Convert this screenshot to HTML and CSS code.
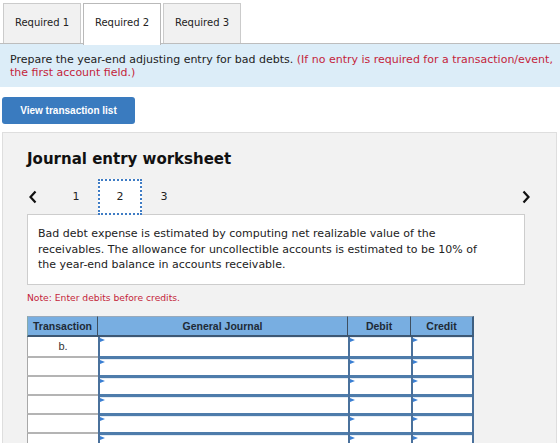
FILE: index.html
```html
<!DOCTYPE html>
<html>
    <head>
        <meta charset="utf-8" />
        <title>Journal entry worksheet</title>
        <link rel="stylesheet" href="styles.css">
    </head>
    <body>
        <div class="tabs">
            <div class="tab">Required 1</div>
            <div class="tab active">Required 2</div>
            <div class="tab">Required 3</div>
        </div>
        <div class="banner">
            Prepare the year-end adjusting entry for bad debts. <span class="red">(If no entry is required for a transaction/event,<br>the first account field.)</span>
        </div>
        <button type="button" class="list-btn">View transaction list</button>
        <div class="worksheet">
            <h3 class="ws-title">Journal entry worksheet</h3>
            <div class="nav">
                <span class="arrow left">
                    <svg width="10" height="14" viewBox="0 0 10 14"><polyline points="7.5,1.5 2.5,7 7.5,12.5" fill="none" stroke="#111" stroke-width="2.2"/></svg>
                </span>
                <span class="step">1</span>
                <span class="step current">2</span>
                <span class="step">3</span>
                <span class="arrow right">
                    <svg width="10" height="14" viewBox="0 0 10 14"><polyline points="2.5,1.5 7.5,7 2.5,12.5" fill="none" stroke="#111" stroke-width="2.2"/></svg>
                </span>
            </div>
            <div class="desc">
                Bad debt expense is estimated by computing net realizable value of the receivables. The allowance for uncollectible accounts is estimated to be 10% of the year-end balance in accounts receivable.
            </div>
            <p class="note">Note: Enter debits before credits.</p>
            <table class="journal">
                <thead>
                    <tr>
                        <th class="c-tr">Transaction</th>
                        <th class="c-gj">General Journal</th>
                        <th class="c-dr">Debit</th>
                        <th class="c-cr">Credit</th>
                    </tr>
                </thead>
                <tbody id="rows"></tbody>
            </table>
        </div>
        <script>
            const rows = document.getElementById('rows');
            for (let i = 0; i < 6; i++) {
                const tr = document.createElement('tr');
                const first = document.createElement('td');
                first.className = 'tr-cell';
                first.textContent = i === 0 ? 'b.' : '';
                tr.appendChild(first);
                ['gj', 'dr', 'cr'].forEach(name => {
                    const td = document.createElement('td');
                    td.className = 'inp ' + name;
                    const field = document.createElement('div');
                    field.className = 'field';
                    td.appendChild(field);
                    tr.appendChild(td);
                });
                rows.appendChild(tr);
            }
        </script>
    </body>
</html>
```

FILE: styles.css
```css
* {
	padding: 0;
	margin: 0;
	box-sizing: border-box;
}
body {
	font-family: "DejaVu Sans", Verdana, sans-serif;
	font-size: 10px;
	color: #222;
	background: #fff;
	width: 560px;
	height: 443px;
	overflow: hidden;
}
.tabs {
	display: flex;
	gap: 2px;
	padding: 3px 0 0 3px;
	height: 44px;
}
.tab {
	width: 78px;
	height: 40px;
	line-height: 38px;
	text-align: center;
	background-color: #f1f1f1;
	border: 1px solid #cbcbcb;
	border-bottom: 0;
}
.tab.active {
	background-color: #fff;
	border-color: #b9b9b9;
	height: 42px;
	position: relative;
	z-index: 2;
}
.banner {
	height: 44px;
	margin-top: -1px;
	border-top: 1px solid #bdbdbd;
	background-color: #dcedf8;
	padding: 9px 0 0 10px;
	font-size: 11px;
	line-height: 13px;
	white-space: nowrap;
}
.red {
	color: #c41f3b;
}
.list-btn {
	display: block;
	width: 133px;
	height: 27px;
	margin: 10px 0 0 2px;
	border: 0;
	border-radius: 3px;
	background-color: #3a7bbf;
	color: #fff;
	font-family: "Liberation Sans", Arial, sans-serif;
	font-weight: bold;
	font-size: 10px;
}
.worksheet {
	margin: 8px 0 0 2px;
	width: 555px;
	height: 311px;
	overflow: hidden;
	background-color: #f2f2f2;
	border: 1px solid #dedede;
	border-bottom: 0;
	padding: 17px 31px 0 24px;
}
.ws-title {
	font-size: 15px;
	line-height: 18px;
	color: #111;
}
.nav {
	display: flex;
	align-items: center;
	height: 36px;
	margin: 11px 0 -1px 0;
	font-size: 11px;
	position: relative;
	z-index: 2;
}
.arrow {
	display: flex;
	align-items: center;
}
.arrow.left {
	width: 27px;
	padding-left: 1px;
}
.arrow.right {
	margin-left: auto;
	margin-right: -6px;
}
.step {
	width: 44px;
	height: 36px;
	line-height: 36px;
	text-align: center;
}
.step.current {
	background-color: #fff;
	border: 2px dotted #3f7cc4;
	line-height: 32px;
}
.desc {
	background-color: #fff;
	border: 1px solid #cdcdcd;
	height: 71px;
	padding: 11px 40px 0 10px;
	font-size: 11px;
	line-height: 15.5px;
}
.note {
	color: #c41f3b;
	font-size: 9.2px;
	line-height: 12px;
	margin: 7px 0 12px 0;
}
.journal {
	border-collapse: separate;
	border-spacing: 0;
	table-layout: fixed;
	width: 447px;
	font-family: "Liberation Sans", Arial, sans-serif;
}
.journal th {
	height: 21px;
	background-color: #78aee1;
	font-size: 10.5px;
	color: #1e2a36;
	border-top: 1px solid #9ab;
	border-right: 1px solid #3e4f60;
	border-bottom: 2px solid #3d5874;
	padding: 0;
}
.journal th.c-tr {
	width: 71px;
	border-left: 1px solid #8aa;
}
.journal th.c-gj {
	width: 250px;
}
.journal th.c-dr {
	width: 63px;
}
.journal th.c-cr {
	width: 63px;
	border-right: 2px solid #3e5f80;
}
.tr-cell {
	height: 19px;
	background-color: #fff;
	border-left: 1px solid #a8a8a8;
	border-top: 2px solid #b4b4b4;
	text-align: center;
	font-size: 11px;
	color: #333;
	padding-bottom: 1px;
}
tbody tr:first-child .tr-cell {
	border-top: 0;
}
.inp {
	height: 19px;
	padding: 0;
	border-left: 2px solid #4a719c;
	background-color: #4e7cab;
	vertical-align: bottom;
}
.inp.cr {
	border-right: 2px solid #4a719c;
}
.field {
	position: relative;
	height: 16px;
	background-color: #fff;
	border-top: 1px solid #e4ecf4;
}
tbody tr:first-child .field {
	height: 19px;
}
.field::before {
	content: "";
	position: absolute;
	left: 0;
	top: 0;
	border-top: 2.5px solid transparent;
	border-bottom: 2.5px solid transparent;
	border-left: 5px solid #3a7fd3;
}
```
